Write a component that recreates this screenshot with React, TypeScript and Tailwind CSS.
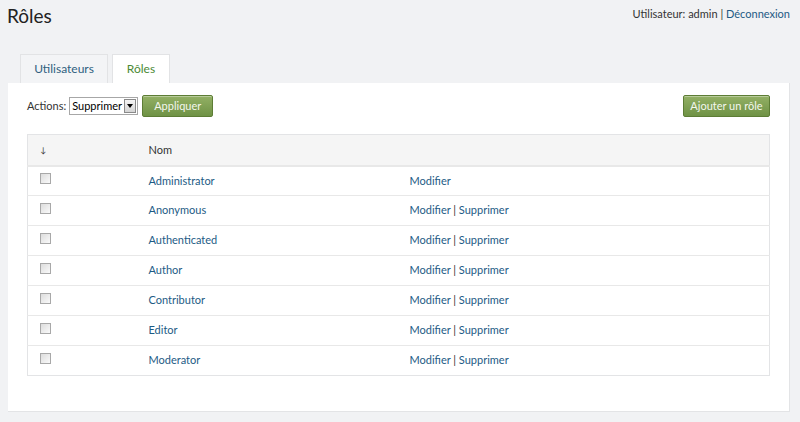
import { useState } from 'react'

const roles = [
  { name: 'Administrator', canDelete: false },
  { name: 'Anonymous', canDelete: true },
  { name: 'Authenticated', canDelete: true },
  { name: 'Author', canDelete: true },
  { name: 'Contributor', canDelete: true },
  { name: 'Editor', canDelete: true },
  { name: 'Moderator', canDelete: true },
]

const linkCls = 'text-[#1d5b85] hover:underline'
const btnCls =
  'h-[22px] rounded-[2px] border border-[#5d7d35] bg-gradient-to-b from-[#93b065] to-[#6f9245] text-[11px] text-[#f4f7ee] shadow-[inset_0_1px_0_rgba(255,255,255,0.35)]'

export default function App() {
  const [tab, setTab] = useState<'users' | 'roles'>('roles')
  const [checked, setChecked] = useState<Record<string, boolean>>({})

  return (
    <div className="min-h-[422px] bg-[#f1f2f4] text-[#333] text-[11px]" style={{ fontFamily: 'Lato, "Open Sans", sans-serif' }}>
      {/* Header */}
      <div className="flex items-start justify-between pl-[7px] pr-[10px]">
        <h1 className="pt-[2px] text-[19px] leading-[28px] text-[#222]">Rôles</h1>
        <div className="pt-[8px] leading-[12px]">
          Utilisateur: admin | <a href="#" className={linkCls}>Déconnexion</a>
        </div>
      </div>

      {/* Tabs */}
      <div className="mt-[24px] flex gap-[4px] pl-[20px]">
        <button
          onClick={() => setTab('users')}
          className={`h-[29px] w-[88px] border border-b-0 border-[#e2e3e5] text-[12px] ${
            tab === 'users' ? 'bg-white text-[#4b8a35]' : 'bg-[#f3f4f6] text-[#2f5f7f]'
          }`}
        >
          Utilisateurs
        </button>
        <button
          onClick={() => setTab('roles')}
          className={`h-[29px] w-[58px] border border-b-0 border-[#e2e3e5] text-[12px] ${
            tab === 'roles' ? 'bg-white text-[#4b8a35]' : 'bg-[#f3f4f6] text-[#2f5f7f]'
          }`}
        >
          Rôles
        </button>
      </div>

      {/* Panel */}
      <div className="ml-[8px] w-[782px] border-r border-b border-[#e3e4e6] bg-white px-[19px] pt-[12px] pb-[35px]">
        <div className="flex items-center justify-between">
          <div className="flex items-center">
            <span className="mr-[3px]">Actions:</span>
            <div className="flex h-[18px] w-[69px] items-center border border-[#a7a7a7] bg-white pl-[2px]">
              <span className="flex-1 text-[11px] text-black">Supprimer</span>
              <span className="mr-[1px] flex h-[14px] w-[12px] items-center justify-center border border-[#8a8a8a] bg-gradient-to-b from-[#f4f4f4] to-[#d4d4d4]">
                <span className="h-0 w-0 border-x-[3.5px] border-t-[4px] border-x-transparent border-t-black" />
              </span>
            </div>
            <button className={`${btnCls} ml-[4px] w-[71px]`}>Appliquer</button>
          </div>
          <button className={`${btnCls} w-[87px]`}>Ajouter un rôle</button>
        </div>

        <table className="mt-[17px] w-[743px] border-collapse border border-[#e3e4e6]">
          <thead>
            <tr className="h-[31px] bg-[#f5f5f5] border-b-2 border-[#e8e8e8]">
              <th className="w-[121px] pl-[12px] text-left font-normal text-[8px]">↓</th>
              <th className="w-[261px] text-left font-normal text-[11px] text-[#333]">Nom</th>
              <th />
            </tr>
          </thead>
          <tbody>
            {roles.map((r) => (
              <tr key={r.name} className="h-[30px] border-t border-[#e8e8e8]">
                <td className="pl-[12px]">
                  <input
                    type="checkbox"
                    checked={!!checked[r.name]}
                    onChange={() => setChecked({ ...checked, [r.name]: !checked[r.name] })}
                    className="mb-[4px] block h-[11px] w-[11px] appearance-none border border-[#a8a8a8] bg-gradient-to-br from-[#dcdcdc] to-[#fafafa]"
                  />
                </td>
                <td>
                  <a href="#" className={linkCls}>{r.name}</a>
                </td>
                <td>
                  <a href="#" className={linkCls}>Modifier</a>
                  {r.canDelete && (
                    <>
                      {' | '}
                      <a href="#" className={linkCls}>Supprimer</a>
                    </>
                  )}
                </td>
              </tr>
            ))}
          </tbody>
        </table>
      </div>
    </div>
  )
}
